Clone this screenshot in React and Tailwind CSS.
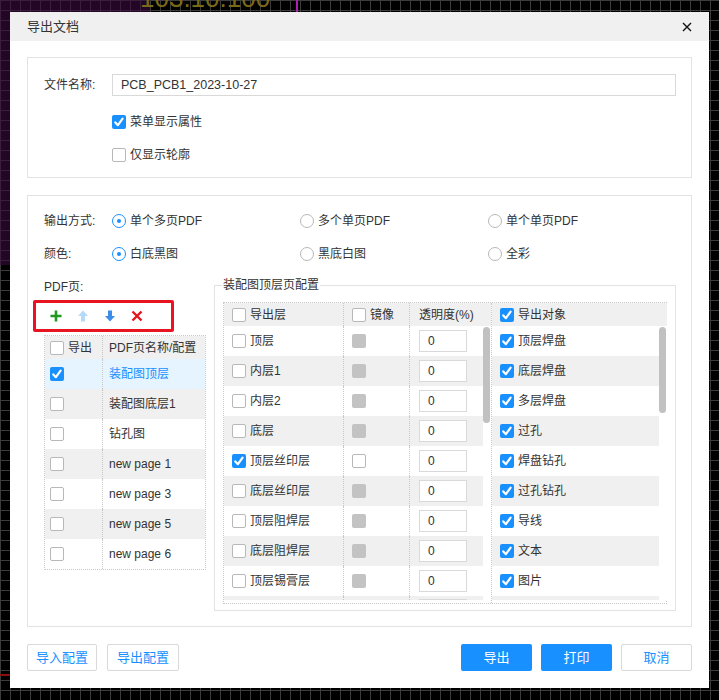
const Check = ({ checked }) =>
  checked ? (
    <span className="flex h-[14px] w-[14px] shrink-0 items-center justify-center rounded-[2px] bg-[#1890ff]">
      <svg viewBox="0 0 14 14" className="h-[14px] w-[14px]">
        <path d="M3.3 7.4 L5.9 10.2 L10.6 3.6" stroke="#fff" strokeWidth="2.2" fill="none" strokeLinecap="round" strokeLinejoin="round" />
      </svg>
    </span>
  ) : (
    <span className="h-[14px] w-[14px] shrink-0 rounded-[2px] border border-[#b8b8b8] bg-white" />
  );

const Radio = ({ on, label }) => (
  <div className="flex items-center gap-[4px]">
    {on ? (
      <span className="flex h-[14px] w-[14px] items-center justify-center rounded-full border border-[#1890ff] bg-white">
        <span className="h-[4px] w-[4px] rounded-full bg-[#1890ff]" />
      </span>
    ) : (
      <span className="h-[14px] w-[14px] rounded-full border border-[#b8b8b8] bg-white" />
    )}
    <span>{label}</span>
  </div>
);

const pages = ['装配图顶层', '装配图底层1', '钻孔图', 'new page 1', 'new page 3', 'new page 5', 'new page 6'];

const layers = [
  { name: '顶层', mirror: 'grey' },
  { name: '内层1', mirror: 'grey' },
  { name: '内层2', mirror: 'grey' },
  { name: '底层', mirror: 'grey' },
  { name: '顶层丝印层', mirror: 'box', on: true },
  { name: '底层丝印层', mirror: 'grey' },
  { name: '顶层阻焊层', mirror: 'grey' },
  { name: '底层阻焊层', mirror: 'grey' },
  { name: '顶层锡膏层', mirror: 'grey' },
];

const objects = ['顶层焊盘', '底层焊盘', '多层焊盘', '过孔', '焊盘钻孔', '过孔钻孔', '导线', '文本', '图片'];

const Btn = ({ children, primary, w }) => (
  <button
    className={
      primary
        ? `flex h-[27px] ${w} items-center justify-center rounded-[2px] bg-[#1890ff] text-[13px] text-white`
        : `flex h-[27px] ${w} items-center justify-center rounded-[2px] border border-[#d9d9d9] bg-white text-[13px] text-[#1890ff]`
    }
  >
    {children}
  </button>
);

export default function App() {
  return (
    <div
      className="relative h-[700px] w-[719px] overflow-hidden bg-black bg-[linear-gradient(to_right,#3c3c3c_1px,transparent_1px),linear-gradient(to_bottom,#3c3c3c_1px,transparent_1px)] bg-[size:10px_10px] pl-[10px] pt-[12px] text-[12px] leading-[16px] text-[#333]"
      style={{ fontFamily: '"Liberation Sans", "Noto Sans CJK SC", sans-serif' }}
    >
      <div className="absolute left-0 top-0 h-[265px] w-[150px] bg-[#3a0a40]/60" />
      <div className="absolute left-[296px] top-0 h-[12px] w-[2px] bg-[#b020b0]" />
      <div className="absolute left-[140px] top-[-16px] text-[26px] leading-[28px] text-[#7a6a18]">103.10.100</div>
      <div className="absolute left-0 top-[674px] h-[2px] w-[10px] bg-[#8a1010]" />

      <div className="relative flex h-[676px] w-[699px] flex-col bg-white">
        <div className="flex h-[29px] items-center justify-between bg-[#f0f0f0] pl-[17px] pr-[17px]">
          <span className="text-[13px]">导出文档</span>
          <svg viewBox="0 0 10 10" className="h-[10px] w-[10px]">
            <path d="M1 1 L9 9 M9 1 L1 9" stroke="#111" strokeWidth="1.4" />
          </svg>
        </div>

        <div className="flex flex-col px-[17px]">
          <div className="mt-[16px] flex h-[121px] flex-col border border-[#e3e3e3] pl-[16px] pr-[15px] pt-[16px]">
            <div className="flex items-center">
              <span className="w-[68px]">文件名称:</span>
              <div className="flex h-[22px] flex-1 items-center border border-[#d9d9d9] pl-[8px] text-[12.5px]">PCB_PCB1_2023-10-27</div>
            </div>
            <div className="ml-[68px] mt-[18px] flex items-center gap-[4px]">
              <Check checked />
              <span>菜单显示属性</span>
            </div>
            <div className="ml-[68px] mt-[17px] flex items-center gap-[4px]">
              <Check />
              <span>仅显示轮廓</span>
            </div>
          </div>

          <div className="mt-[17px] flex h-[432px] flex-col border border-[#e3e3e3] pl-[16px] pr-[15px] pt-[15px]">
            <div className="flex h-[20px] items-center">
              <span className="w-[68px]">输出方式:</span>
              <div className="w-[188px]"><Radio on label="单个多页PDF" /></div>
              <div className="w-[188px]"><Radio label="多个单页PDF" /></div>
              <div className="w-[188px]"><Radio label="单个单页PDF" /></div>
            </div>
            <div className="mt-[13px] flex h-[20px] items-center">
              <span className="w-[68px]">颜色:</span>
              <div className="w-[188px]"><Radio on label="白底黑图" /></div>
              <div className="w-[188px]"><Radio label="黑底白图" /></div>
              <div className="w-[188px]"><Radio label="全彩" /></div>
            </div>

            <div className="mt-[14px] flex">
              <div className="flex w-[162px] flex-col">
                <div className="flex h-[18px] items-center">PDF页:</div>
                <div className="relative mt-[4px] flex h-[32px] items-center gap-[13px] pl-[5px]">
                  <svg viewBox="0 0 14 14" className="h-[14px] w-[14px]">
                    <path d="M7 1.5 V12.5 M1.5 7 H12.5" stroke="#1f9a1f" strokeWidth="2.6" />
                  </svg>
                  <svg viewBox="0 0 14 14" className="h-[14px] w-[14px]">
                    <path d="M7 1.5 L12 7 H9 V12.5 H5 V7 H2 Z" fill="#b4dafa" />
                  </svg>
                  <svg viewBox="0 0 14 14" className="h-[14px] w-[14px]">
                    <path d="M7 12.5 L12 7 H9 V1.5 H5 V7 H2 Z" fill="#3b8ee8" />
                  </svg>
                  <svg viewBox="0 0 14 14" className="h-[14px] w-[14px]">
                    <path d="M2.5 2.5 L11.5 11.5 M11.5 2.5 L2.5 11.5" stroke="#e5151d" strokeWidth="2.4" />
                  </svg>
                  <div className="absolute left-[-11px] top-0 h-[32px] w-[141px] rounded-[2px] border-[3px] border-[#e8141f]" />
                </div>
                <div className="mt-[3px] flex flex-col border border-dotted border-[#c8c8c8]">
                  <div className="flex h-[23px] items-center bg-[#f0f0f0]">
                    <div className="flex h-full w-[58px] items-center gap-[4px] border-r border-dotted border-[#c8c8c8] pl-[5px]">
                      <Check />
                      <span>导出</span>
                    </div>
                    <span className="pl-[6px]">PDF页名称/配置</span>
                  </div>
                  {pages.map((p, i) => (
                    <div
                      key={p}
                      className={`flex h-[30px] items-center ${i === 0 ? 'bg-[#e5f4ff]' : i % 2 ? 'bg-[#f0f0f0]' : 'bg-white'}`}
                    >
                      <div className="flex h-full w-[58px] items-center border-r border-dotted border-[#c8c8c8] pl-[5px]">
                        <Check checked={i === 0} />
                      </div>
                      <span className={`pl-[6px] ${i === 0 ? 'text-[#1890ff]' : ''}`}>{p}</span>
                    </div>
                  ))}
                </div>
              </div>

              <div className="relative ml-[8px] mt-[7px] h-[326px] w-[462px] border border-[#e3e3e3] pl-[8px] pt-[16px]">
                <div className="absolute left-[7px] top-[-9px] bg-white px-[1px] leading-[16px]">装配图顶层页配置</div>
                <div className="flex h-[302px] w-[444px] border border-dotted border-[#c8c8c8]">
                  <div className="flex w-[268px] flex-col border-r border-dotted border-[#c8c8c8]">
                    <div className="flex h-[23px] shrink-0 items-center bg-[#f0f0f0]">
                      <div className="flex h-full w-[120px] items-center gap-[4px] border-r border-dotted border-[#c8c8c8] pl-[8px]">
                        <Check />
                        <span>导出层</span>
                      </div>
                      <div className="flex h-full w-[66px] items-center gap-[4px] border-r border-dotted border-[#c8c8c8] pl-[8px]">
                        <Check />
                        <span>镜像</span>
                      </div>
                      <span className="pl-[9px]">透明度(%)</span>
                    </div>
                    <div className="relative flex h-[274px] overflow-hidden">
                      <div className="flex w-[260px] flex-col">
                        {layers.map((l, i) => (
                          <div key={l.name} className={`flex h-[30px] shrink-0 items-center ${i % 2 ? 'bg-[#f0f0f0]' : 'bg-white'}`}>
                            <div className="flex h-full w-[120px] items-center gap-[4px] border-r border-dotted border-[#c8c8c8] pl-[8px]">
                              <Check checked={l.on} />
                              <span>{l.name}</span>
                            </div>
                            <div className="flex h-full w-[66px] items-center border-r border-dotted border-[#c8c8c8] pl-[8px]">
                              {l.mirror === 'grey' ? (
                                <span className="h-[14px] w-[14px] rounded-[2px] bg-[#c3c3c3]" />
                              ) : (
                                <Check />
                              )}
                            </div>
                            <div className="flex h-full items-center pl-[9px]">
                              <div className="flex h-[22px] w-[48px] items-center border border-[#d9d9d9] bg-white pl-[8px]">0</div>
                            </div>
                          </div>
                        ))}
                        <div className="flex h-[30px] shrink-0 bg-[#f0f0f0]">
                          <div className="h-full w-[120px] border-r border-dotted border-[#c8c8c8]" />
                          <div className="h-full w-[66px] border-r border-dotted border-[#c8c8c8]" />
                          <div className="pl-[9px] pt-[3px]">
                            <div className="h-[22px] w-[48px] border border-[#d9d9d9] bg-white" />
                          </div>
                        </div>
                      </div>
                      <div className="w-[8px] bg-white pt-[1px]">
                        <div className="h-[96px] w-[7px] rounded-full bg-[#c1c1c1]" />
                      </div>
                    </div>
                  </div>
                  <div className="flex flex-1 flex-col">
                    <div className="flex h-[23px] shrink-0 items-center gap-[4px] bg-[#f0f0f0] pl-[8px]">
                      <Check checked />
                      <span>导出对象</span>
                    </div>
                    <div className="flex h-[274px] overflow-hidden">
                      <div className="flex w-[167px] flex-col">
                        {objects.map((o, i) => (
                          <div key={o} className={`flex h-[30px] shrink-0 items-center gap-[4px] pl-[8px] ${i % 2 ? 'bg-[#f0f0f0]' : 'bg-white'}`}>
                            <Check checked />
                            <span>{o}</span>
                          </div>
                        ))}
                        <div className="h-[30px] shrink-0 bg-[#f0f0f0]" />
                      </div>
                      <div className="w-[8px] bg-white pt-[1px]">
                        <div className="h-[86px] w-[7px] rounded-full bg-[#c1c1c1]" />
                      </div>
                    </div>
                  </div>
                </div>
              </div>
            </div>
          </div>

          <div className="mt-[17px] flex items-center justify-between">
            <div className="flex gap-[10px]">
              <Btn w="w-[70px]">导入配置</Btn>
              <Btn w="w-[72px]">导出配置</Btn>
            </div>
            <div className="flex gap-[9px]">
              <Btn primary w="w-[71px]">导出</Btn>
              <Btn primary w="w-[71px]">打印</Btn>
              <Btn w="w-[71px]">取消</Btn>
            </div>
          </div>
        </div>
      </div>
    </div>
  );
}
